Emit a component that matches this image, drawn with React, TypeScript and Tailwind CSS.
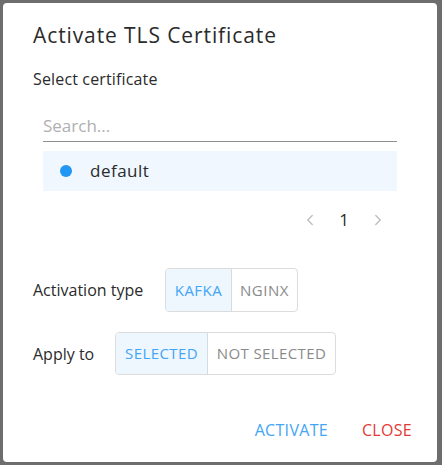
import { ChevronLeft, ChevronRight } from 'lucide-react'

const font = { fontFamily: '"Open Sans", "DejaVu Sans", sans-serif' }

export default function App() {
  return (
    <div className="relative w-[442px] h-[465px] bg-[#6d6d6d] p-[3px] pr-[5px]" style={font}>
      <div className="h-[459px] bg-white rounded-[4px] px-[30px] pt-[18px] flex flex-col text-[#2b2b2b]">
        <h2 className="text-[21px] leading-[28px] tracking-[0.9px]">Activate TLS Certificate</h2>

        <p className="mt-[20px] text-[16px] leading-[20px] tracking-[0.15px]">Select certificate</p>

        {/* certificate list */}
        <div className="mt-[20px] mx-[10px]">
          <input
            className="w-full h-[33px] border-b border-[#8f8f8f] outline-none text-[17px] placeholder:text-[#b0b0b0]"
            placeholder="Search..."
          />
          <div className="mt-[9px] h-[40px] bg-[#f0f7fe] flex items-center pl-[17px]">
            <span className="w-[12px] h-[12px] rounded-full bg-[#2196f3]" />
            <span className="ml-[18px] text-[17px] tracking-[0.5px]">default</span>
          </div>
          <div className="mt-[17px] flex items-center justify-end gap-[20px] pr-[10px] h-[24px]">
            <ChevronLeft size={18} strokeWidth={1.75} className="text-[#bdbdbd]" />
            <span className="text-[17px]">1</span>
            <ChevronRight size={18} strokeWidth={1.75} className="text-[#bdbdbd]" />
          </div>
        </div>

        <div className="mt-[36px] flex items-center">
          <span className="text-[16px] w-[132px]">Activation type</span>
          <div className="flex h-[44px] border border-[#dcdcdc] rounded-[4px] overflow-hidden text-[15px] tracking-[0.5px]">
            <div className="w-[66px] flex items-center justify-center bg-[#eef6fe] text-[#42a5f5] border-r border-[#d3dbe3]">KAFKA</div>
            <div className="w-[65px] flex items-center justify-center text-[#8a8a8a]">NGINX</div>
          </div>
        </div>

        <div className="mt-[20px] flex items-center">
          <span className="text-[16px] w-[82px]">Apply to</span>
          <div className="flex h-[43px] border border-[#dcdcdc] rounded-[4px] overflow-hidden text-[15px] tracking-[0.4px]">
            <div className="w-[92px] flex items-center justify-center bg-[#eef6fe] text-[#42a5f5] border-r border-[#d3dbe3]">SELECTED</div>
            <div className="w-[127px] flex items-center justify-center text-[#8a8a8a]">NOT SELECTED</div>
          </div>
        </div>

        <div className="mt-auto mb-[20px] flex justify-end gap-[34px] text-[16px] tracking-[0.3px]">
          <button className="text-[#42a5f5]">ACTIVATE</button>
          <button className="text-[#e53935] mr-[-5px]">CLOSE</button>
        </div>
      </div>
    </div>
  )
}
